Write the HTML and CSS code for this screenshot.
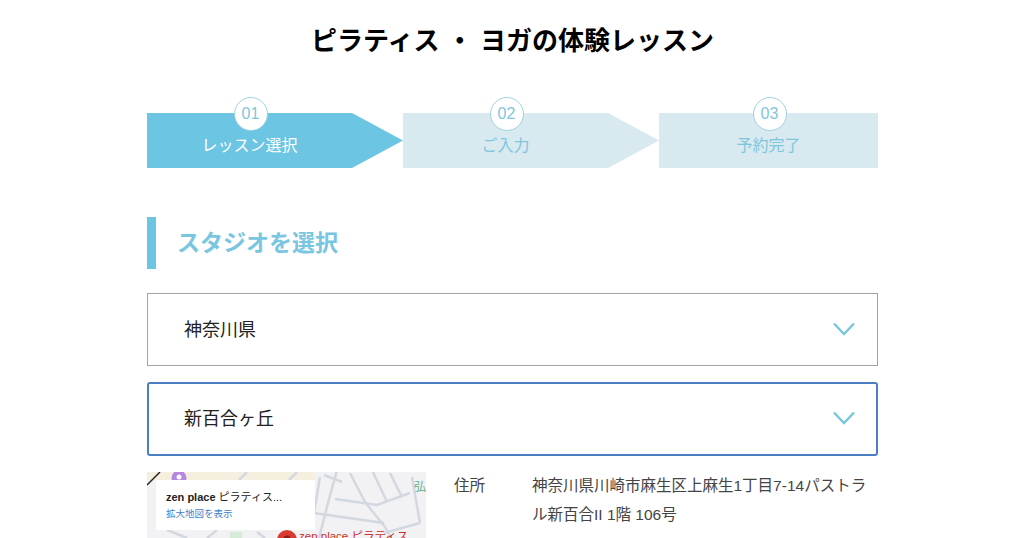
FILE: index.html
```html
<!DOCTYPE html>
<html lang="ja">
    <head>
        <meta charset="UTF-8">
        <title>ピラティス ・ ヨガの体験レッスン</title>
        <link rel="stylesheet" href="styles.css">
    </head>
    <body>
        <div class="page">
            <h1 class="title">ピラティス ・ ヨガの体験レッスン</h1>

            <ol class="steps">
                <li class="step step--first is-current">
                    <span class="step-num">01</span>
                    <span class="step-label">レッスン選択</span>
                </li>
                <li class="step step--second">
                    <span class="step-num">02</span>
                    <span class="step-label">ご入力</span>
                </li>
                <li class="step step--last">
                    <span class="step-num">03</span>
                    <span class="step-label">予約完了</span>
                </li>
            </ol>

            <h2 class="section-title">スタジオを選択</h2>

            <div class="select">
                <span class="select-text">神奈川県</span>
                <svg class="chevron" viewBox="0 0 22 14"><path d="M1 1.5 11 12 21 1.5"/></svg>
            </div>
            <div class="select select--focus">
                <span class="select-text">新百合ヶ丘</span>
                <svg class="chevron" viewBox="0 0 22 14"><path d="M1 1.5 11 12 21 1.5"/></svg>
            </div>

            <div class="studio">
                <div class="map">
                    <svg class="map-bg" viewBox="0 0 279 66">
                        <rect width="279" height="66" fill="#f2f2f4"/>
                        <path d="M0 0h168v8H0z" fill="#f5efe0"/>
                        <path d="M83 60h12v6H83z" fill="#d5ecd6"/>
                        <g class="roads">
                            <path d="M190 -2 181 31 172 66"/>
                            <path d="M173 5 167 41"/>
                            <path d="M177 3 195 10"/>
                            <path d="M203 1 218 30 238 55"/>
                            <path d="M188 27 230 33 263 21"/>
                            <path d="M167 41 237 51"/>
                            <path d="M225 -2 240 30"/>
                            <path d="M243 1 255 25"/>
                            <path d="M265 5 273 51"/>
                            <path d="M237 61 273 51"/>
                            <path d="M238 55 244 66"/>
                            <path d="M20 58 40 66"/>
                            <path d="M60 66 70 58"/>
                            <path d="M110 60 118 66"/>
                            <path d="M100 0 92 8"/>
                            <path d="M150 0 142 8"/>
                        </g>
                        <path d="M0 13 13 0" stroke="#222" stroke-width="1.5"/>
                        <circle cx="32" cy="6" r="7.5" fill="#b587de"/>
                        <circle cx="32" cy="5" r="2.5" fill="#fff"/>
                        <circle cx="140" cy="68" r="10" fill="#d93a32"/>
                        <circle cx="140" cy="67" r="3.5" fill="#8e1c16"/>
                    </svg>
                    <span class="map-kanji">弘</span>
                    <span class="map-place">zen place ピラティス</span>
                    <div class="map-card">
                        <p class="map-name"><b>zen place</b> ピラティス...</p>
                        <p class="map-link">拡大地図を表示</p>
                    </div>
                </div>
                <dl class="info">
                    <dt>住所</dt>
                    <dd>神奈川県川崎市麻生区上麻生1丁目7-14パストラル新百合II 1階 106号</dd>
                </dl>
            </div>
        </div>
    </body>
</html>
```

FILE: styles.css
```css
html, body {
    margin:0;
    padding:0;
    height:538px;
    overflow:hidden;
    background:#fff;
}
body {
    font-family:"Liberation Sans", "Noto Sans CJK JP", sans-serif;
    color:#333;
}
.page {
    width:731px;
    margin:0 auto;
    padding-left:1px;
}
.title {
    margin:0;
    padding-top:23px;
    font-size:26px;
    line-height:36px;
    font-weight:700;
    text-align:center;
    color:#000;
}
.steps {
    display:flex;
    list-style:none;
    margin:0;
    padding:0;
    margin-top:54px;
}
.step {
    position:relative;
    height:55px;
    width:256px;
    background:#d8e9f0;
    color:#7fc6dd;
    text-align:center;
}
.step--first, .step--second {
    background:none;
}
.step--first::before, .step--second::before {
    content:"";
    position:absolute;
    top:0;
    left:0;
    width:256px;
    height:55px;
    background:#d8e9f0;
    clip-path:polygon(0 0, 205px 0, 100% 50%, 205px 100%, 0 100%);
}
.step--first::before {
    background:#6cc5e2;
}
.step--last {
    width:219px;
}
.step-num {
    position:absolute;
    top:-16px;
    left:86.5px;
    box-sizing:border-box;
    width:34px;
    height:34px;
    line-height:32px;
    border:1px solid #9fd3e2;
    border-radius:50%;
    background:#fff;
    font-size:16px;
    color:#7fc6dd;
}
.step--last .step-num {
    left:93.5px;
}
.step-label {
    position:absolute;
    top:22px;
    left:0;
    width:205px;
    font-size:16px;
    line-height:22px;
}
.step--last .step-label {
    width:219px;
}
.is-current .step-label {
    color:#fff;
}
.section-title {
    margin:49px 0 24px;
    height:52px;
    box-sizing:border-box;
    padding-left:21px;
    border-left:9px solid #6cc5e2;
    font-size:23px;
    line-height:52px;
    font-weight:700;
    color:#78c6e0;
}
.select {
    display:flex;
    align-items:center;
    justify-content:space-between;
    box-sizing:border-box;
    height:73px;
    margin-bottom:16px;
    padding:0 22px 2px 36px;
    border:1px solid #a3a3a3;
    font-size:18px;
    color:#222;
}
.select--focus {
    height:74px;
    padding:0 21px 2px 35px;
    border:2px solid #4a7fc4;
    border-radius:3px;
}
.select-text {
    padding-bottom:2px;
}
.chevron {
    width:22px;
    height:14px;
    fill:none;
    stroke:#78c6dc;
    stroke-width:2.4;
}
.studio {
    display:flex;
    gap:28px;
}
.map {
    position:relative;
    flex:none;
    width:279px;
    height:66px;
    overflow:hidden;
}
.map-bg {
    display:block;
    width:279px;
    height:66px;
}
.roads path {
    fill:none;
    stroke:#d3d8e0;
    stroke-width:2.5;
}
.map-kanji {
    position:absolute;
    top:5px;
    right:0;
    font-size:12px;
    color:#5fb08a;
}
.map-place {
    position:absolute;
    top:57px;
    left:152px;
    font-size:11.5px;
    line-height:14px;
    white-space:nowrap;
    color:#c8312b;
}
.map-card {
    position:absolute;
    top:8px;
    left:9px;
    width:159px;
    height:50px;
    box-sizing:border-box;
    padding:9px 10px;
    background:#fff;
}
.map-name {
    margin:0;
    font-size:11px;
    line-height:16px;
    color:#222;
    white-space:nowrap;
}
.map-link {
    margin:3px 0 0;
    font-size:9.5px;
    line-height:12px;
    color:#3f7fcf;
}
.info {
    display:flex;
    margin:0;
    font-size:15.5px;
    line-height:29px;
    color:#444;
}
.info dt {
    flex:none;
    width:78px;
    margin-top:-1px;
}
.info dd {
    margin:-1px 0 0;
    width:340px;
}
```
